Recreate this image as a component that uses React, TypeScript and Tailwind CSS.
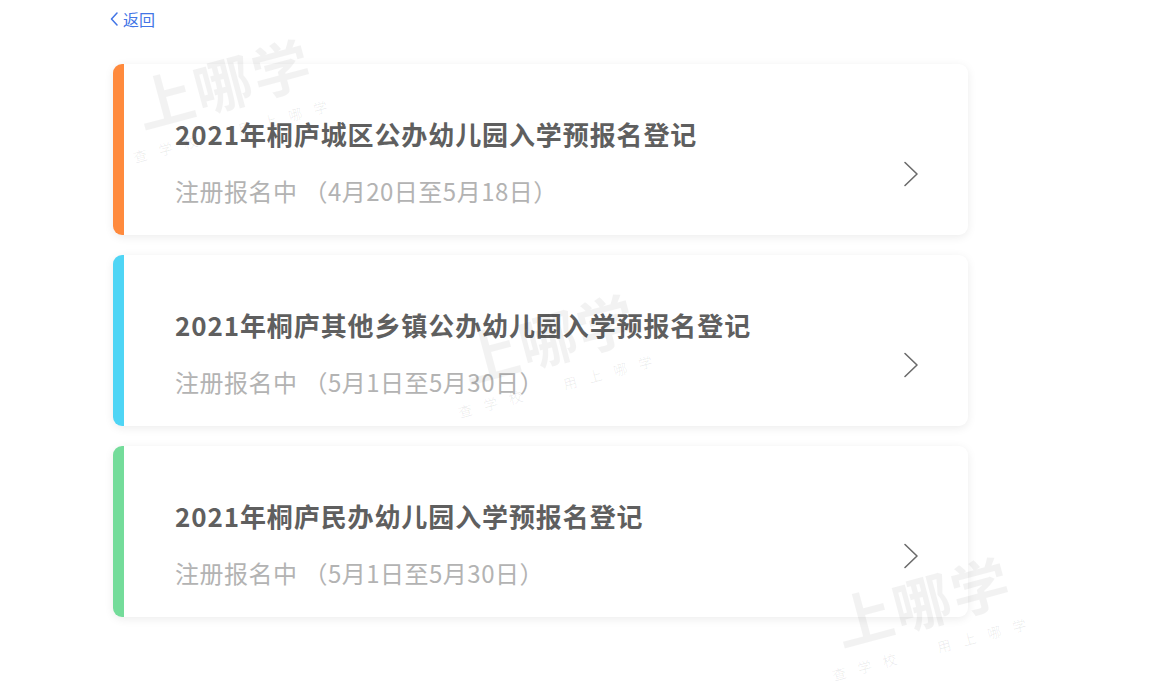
import React from "react";

const font = { fontFamily: '"Noto Sans CJK SC", "Noto Sans", sans-serif' };

type Item = { title: string; sub: string; color: string };

const items: Item[] = [
  { title: "2021年桐庐城区公办幼儿园入学预报名登记", sub: "注册报名中 （4月20日至5月18日）", color: "border-l-[#ff8a3d]" },
  { title: "2021年桐庐其他乡镇公办幼儿园入学预报名登记", sub: "注册报名中 （5月1日至5月30日）", color: "border-l-[#4fd5f5]" },
  { title: "2021年桐庐民办幼儿园入学预报名登记", sub: "注册报名中 （5月1日至5月30日）", color: "border-l-[#74dc9a]" },
];

function Chevron() {
  return (
    <svg width="16" height="26" viewBox="0 0 16 26" fill="none">
      <path d="M2 1.5 L14 13 L2 24.5" stroke="#6b6b6b" strokeWidth="1.6" strokeLinecap="round" strokeLinejoin="round" />
    </svg>
  );
}

function Card({ item }: { item: Item }) {
  return (
    <div
      className={`flex h-[171px] w-[855px] rounded-[9px] border-l-[11px] ${item.color} bg-white shadow-[0_2px_10px_rgba(0,0,0,0.08)]`}
    >
      <div className="flex flex-1 flex-col pl-[51px] pt-[52px]">
        <div className="text-[26px] font-bold leading-[36px] tracking-[0.9px] text-[#5f5f5f]">{item.title}</div>
        <div className="mt-[23px] text-[24px] leading-[32px] tracking-[0.5px] text-[#b3b3b3]">{item.sub}</div>
      </div>
      <div className="mr-[49px] mt-[97px] self-start">
        <Chevron />
      </div>
    </div>
  );
}

function Watermark({ left, top }: { left: number; top: number }) {
  return (
    <div
      className="pointer-events-none absolute flex h-[90px] w-[200px] -rotate-[15deg] flex-col items-center"
      style={{ left, top }}
    >
      <div className="text-[58px] font-bold leading-[60px] tracking-[2px] text-black/[0.05]">上哪学</div>
      <div className="mt-[10px] whitespace-pre text-[14px] leading-[20px] tracking-[12px] text-black/[0.07]">
        查学校  用上哪学
      </div>
    </div>
  );
}

export default function App() {
  return (
    <div className="relative h-[691px] w-[1156px] overflow-hidden bg-white" style={font}>
      <div className="flex items-center pl-[110px] pt-[9px] text-[16px] leading-[20px] text-[#4275e6]">
        <svg width="9" height="14" viewBox="0 0 9 14" fill="none" className="mr-[4px]">
          <path d="M7 1 L1.5 7 L7 13" stroke="#4275e6" strokeWidth="1.5" strokeLinecap="round" strokeLinejoin="round" />
        </svg>
        <span>返回</span>
      </div>
      <div className="mt-[35px] flex flex-col gap-[20px] pl-[113px]">
        {items.map((it) => (
          <Card key={it.title} item={it} />
        ))}
      </div>
      <Watermark left={127} top={51} />
      <Watermark left={452} top={306} />
      <Watermark left={826} top={569} />
    </div>
  );
}
